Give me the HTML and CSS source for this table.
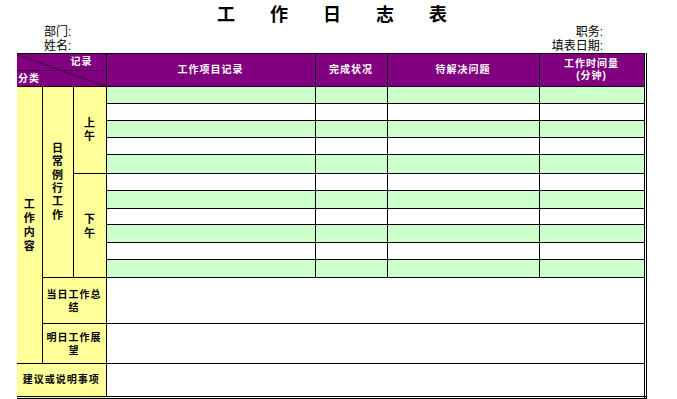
FILE: index.html
```html
<!DOCTYPE html>
<html lang="zh-CN">
<head>
<meta charset="utf-8">
<title>工作日志表</title>
<link rel="stylesheet" href="styles.css">
</head>
<body>
<div class="sheet">
  <h1 class="title">工作日志表</h1>
  <div class="info">
    <div class="info-left">
      <div>部门:</div>
      <div>姓名:</div>
    </div>
    <div class="info-right">
      <div>职务:</div>
      <div>填表日期:</div>
    </div>
  </div>
  <table class="log">
    <colgroup>
      <col class="c1"><col class="c2"><col class="c3"><col class="c4"><col class="c5"><col class="c6"><col class="c7">
    </colgroup>
    <thead>
      <tr class="head">
        <th colspan="3" class="diag">
          <div class="rec">记录</div>
          <div class="cat">分类</div>
        </th>
        <th>工作项目记录</th>
        <th>完成状况</th>
        <th>待解决问题</th>
        <th class="tline">工作时间量<br>(分钟)</th>
      </tr>
    </thead>
    <tbody>
      <tr class="h17 g">
        <td rowspan="13" class="y"><div class="vert wide">工作内容</div></td>
        <td rowspan="11" class="y"><div class="vert">日常例行工作</div></td>
        <td rowspan="5" class="y"><div class="vert">上午</div></td>
        <td></td><td></td><td></td><td></td>
      </tr>
      <tr class="h17"><td></td><td></td><td></td><td></td></tr>
      <tr class="h17 g"><td></td><td></td><td></td><td></td></tr>
      <tr class="h17"><td></td><td></td><td></td><td></td></tr>
      <tr class="h19 g"><td></td><td></td><td></td><td></td></tr>
      <tr class="h17">
        <td rowspan="6" class="y"><div class="vert wide">下午</div></td>
        <td></td><td></td><td></td><td></td>
      </tr>
      <tr class="h18 g"><td></td><td></td><td></td><td></td></tr>
      <tr class="h16"><td></td><td></td><td></td><td></td></tr>
      <tr class="h18 g"><td></td><td></td><td></td><td></td></tr>
      <tr class="h17"><td></td><td></td><td></td><td></td></tr>
      <tr class="h18 g"><td></td><td></td><td></td><td></td></tr>
      <tr class="h46">
        <td colspan="2" class="y"><div class="wrap">当日工作总结</div></td>
        <td colspan="4"></td>
      </tr>
      <tr class="h40">
        <td colspan="2" class="y"><div class="wrap">明日工作展望</div></td>
        <td colspan="4"></td>
      </tr>
      <tr class="h34">
        <td colspan="3" class="y">建议或说明事项</td>
        <td colspan="4"></td>
      </tr>
    </tbody>
  </table>
</div>
</body>
</html>
```

FILE: styles.css
```css
html, body {
  margin: 0;
  padding: 0;
  background: #ffffff;
}

body {
  font-family: "Liberation Sans", "Noto Sans CJK SC", sans-serif;
  color: #000000;
}

.sheet {
  width: 677px;
  height: 399px;
  overflow: hidden;
}

.title {
  margin: 0;
  padding: 3px 0 0 217px;
  height: 22px;
  font-family: "Noto Sans CJK SC", sans-serif;
  font-size: 18px;
  line-height: 20px;
  font-weight: bold;
  letter-spacing: 35px;
  white-space: nowrap;
}

.info {
  display: flex;
  justify-content: space-between;
  padding: 0 74px 0 44px;
  font-size: 12px;
  line-height: 14px;
  height: 28px;
}

.info-right {
  text-align: right;
}

.log {
  margin-left: 17px;
  border-collapse: collapse;
  table-layout: fixed;
  border-top: 1px solid #000000;
  border-right: 3px double #000000;
  border-bottom: 3px double #000000;
}

.c1 { width: 25px; }
.c2 { width: 31px; }
.c3 { width: 33px; }
.c4 { width: 209px; }
.c5 { width: 72px; }
.c6 { width: 152px; }
.c7 { width: 106px; }

.log th,
.log td {
  padding: 0;
  border: 1px solid #000000;
  font-size: 10px;
  font-weight: bold;
  letter-spacing: 1px;
  text-align: center;
  vertical-align: middle;
  line-height: 12px;
}

.log tr > :first-child {
  border-left: none;
}

.log .head {
  height: 32px;
}

.log th {
  background: #800080;
  color: #ffffff;
  border-color: #1a001a;
}

.log th.diag {
  border-left: none;
  background-color: #800080;
  background-image: linear-gradient(to top right, transparent calc(50% - 0.8px), #2a002a 50%, transparent calc(50% + 0.8px));
}

.diag .rec {
  height: 16px;
  line-height: 16px;
  text-align: right;
  padding-right: 13px;
  border-bottom: 1px solid #4a004a;
}

.diag .cat {
  height: 15px;
  line-height: 15px;
  text-align: left;
  padding-left: 1px;
}

.log tbody td {
  background: #ffffff;
}

.log tr.g td {
  background: #ccffcc;
}

.log td.y,
.log tr.g td.y {
  background: #ffff99;
}

.vert {
  width: 11px;
  margin: 0 auto;
  line-height: 13.4px;
  letter-spacing: 0;
  font-size: 11px;
}

.vert.wide {
  line-height: 14px;
}

.wrap {
  width: 58px;
  margin: 0 auto;
  font-size: 10px;
  letter-spacing: 1px;
  line-height: 13px;
}

.h16 { height: 16px; }
.h17 { height: 17px; }
.h18 { height: 18px; }
.h19 { height: 19px; }
.h34 { height: 34px; }
.h40 { height: 40px; }
.h46 { height: 46px; }
```
